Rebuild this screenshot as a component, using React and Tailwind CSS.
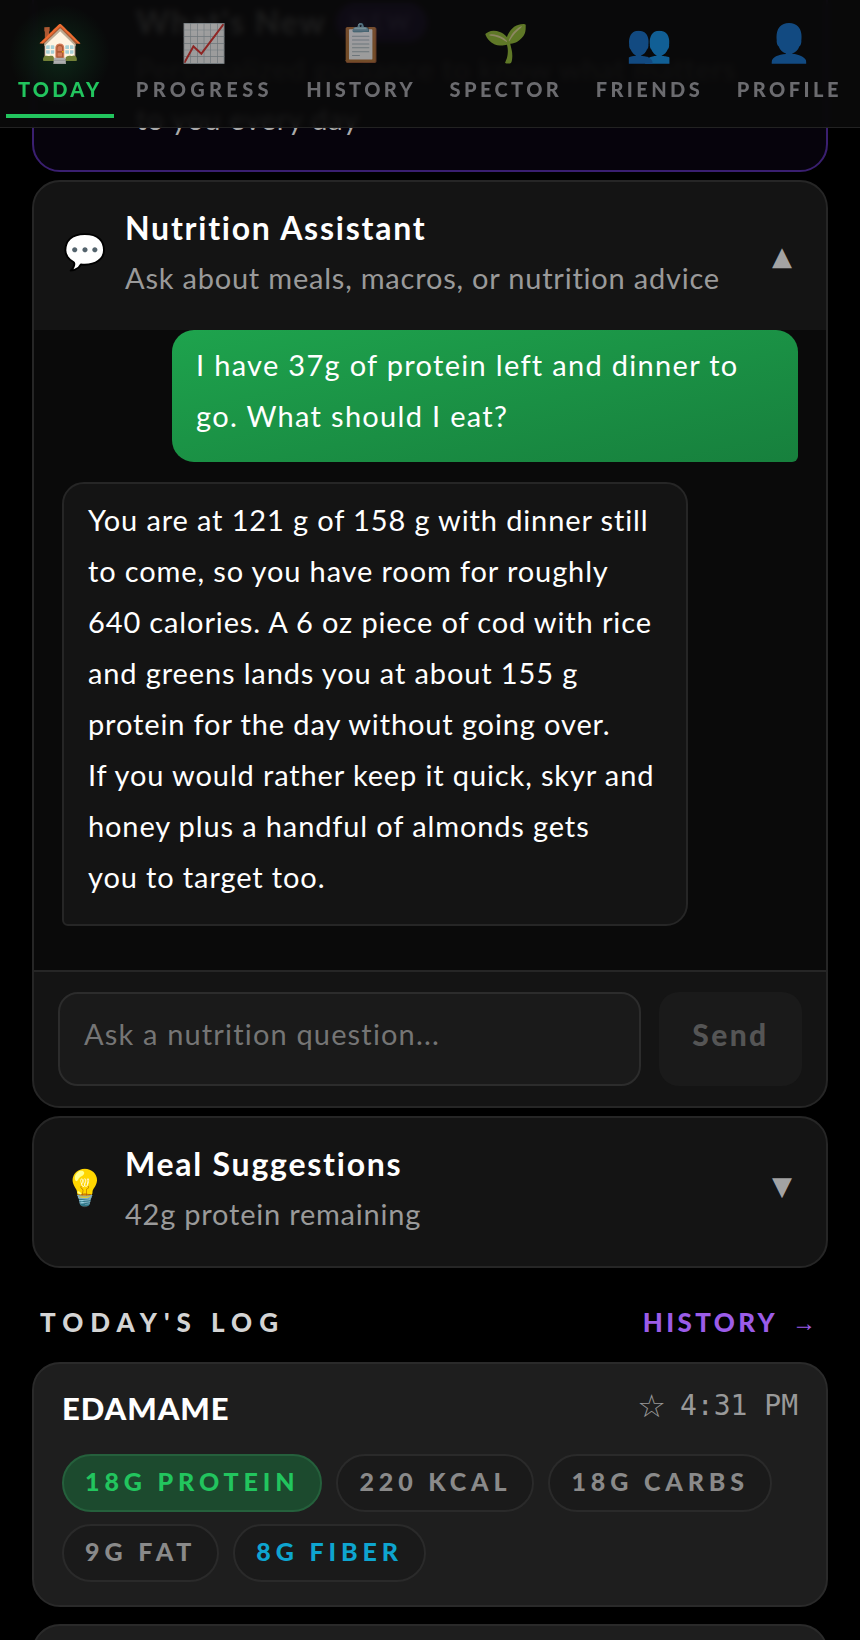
const tabs = [
  { icon: "🏠", label: "TODAY", active: true, spacing: "tracking-[0.16em]" },
  { icon: "📈", label: "PROGRESS", spacing: "tracking-[0.215em]" },
  { icon: "📋", label: "HISTORY", spacing: "tracking-[0.17em]" },
  { icon: "🌱", label: "SPECTOR", spacing: "tracking-[0.17em]" },
  { icon: "👥", label: "FRIENDS", spacing: "tracking-[0.17em]" },
  { icon: "👤", label: "PROFILE", spacing: "tracking-[0.175em]" },
];

const NavTab = ({ icon, label, active, spacing }) => (
  <div className="relative flex h-[118px] flex-col items-center px-3 pt-[17px]">
    {active && (
      <div className="absolute left-1/2 top-0 h-[110px] w-[110px] -translate-x-1/2 rounded-full bg-[radial-gradient(circle,rgba(34,197,94,0.16),transparent_65%)]" />
    )}
    <span className={`relative text-[37px] leading-[50px] ${active ? "" : "opacity-60"}`}>{icon}</span>
    <span
      className={`relative mt-[10px] text-[20px] font-black leading-[24px] ${spacing} ${
        active ? "text-[#22c55e]" : "text-[#6b6b6f]"
      }`}
    >
      {label}
    </span>
    {active && <div className="absolute bottom-0 left-0 right-0 h-[4px] bg-[#22c55e]" />}
  </div>
);

const PanelHead = ({ icon, title, sub, arrow, arrowClass = "" }) => (
  <div className="flex items-center bg-[#141414] pl-[29px] pr-[34px]">
    <span className="-mt-[12px] w-[38px] text-center text-[35px] leading-none">{icon}</span>
    <div className="-mt-[6px] ml-[24px] flex-1">
      <div className="text-[32px] font-bold leading-[50px] tracking-[0.055em] text-white">{title}</div>
      <div className="text-[29px] leading-[50px] tracking-[0.027em] text-[#9a9a9a]">{sub}</div>
    </div>
    <span className={`font-['DejaVu_Sans'] text-[26px] text-[#a3a3a3] ${arrowClass}`}>{arrow}</span>
  </div>
);

const Chip = ({ children, className }) => (
  <span
    className={`flex h-[58px] items-center rounded-full border-2 px-[21px] pb-[2px] text-[25px] font-black tracking-[0.195em] ${className}`}
  >
    {children}
  </span>
);

export default function App() {
  return (
    <div className="relative h-[1640px] overflow-hidden bg-black px-[32px] font-['Lato',sans-serif]">
      <nav className="absolute inset-x-0 top-0 z-10 flex h-[128px] justify-between border-b border-[#222] bg-[rgba(10,10,10,0.9)] px-[6px] backdrop-blur-[3px]">
        {tabs.map((tab) => (
          <NavTab key={tab.label} {...tab} />
        ))}
      </nav>

      <div className="mt-[-40px] flex h-[212px] flex-col rounded-[28px] border-2 border-[#3a1f70] bg-[#06030c] px-[102px] pt-[38px]">
        <div className="flex h-[44px] items-center gap-[10px]">
          <span className="text-[32px] font-bold tracking-[0.05em] text-[#ccc]">What's New</span>
          <span className="rounded-full bg-[#3b1a78] px-[14px] py-[3px] text-[22px] font-bold tracking-[0.15em] text-[#8f6fd0]">NEW</span>
        </div>
        <div className="whitespace-nowrap text-[29px] leading-[50px] tracking-[0.027em] text-[#aaa]">
          <span className="text-[#555]">Personalized guidance to know what matters</span>
          <br />
          to you every day
        </div>
      </div>

      <section className="mt-[8px] overflow-hidden rounded-[28px] border-2 border-[#262626] bg-[#141414]">
        <div className="flex h-[148px] items-center">
          <div className="w-full">
            <PanelHead
              icon="💬"
              title="Nutrition Assistant"
              sub="Ask about meals, macros, or nutrition advice"
              arrow="▲"
            />
          </div>
        </div>
        <div className="flex flex-col bg-[#0a0a0a] px-[28px] pb-[44px]">
          <div className="ml-auto w-[626px] rounded-[22px] rounded-br-[6px] bg-gradient-to-br from-[#1ea34d] to-[#17803d] px-[24px] pb-[21px] pt-[9px] text-[29px] leading-[51px] tracking-[0.045em] text-white">
            I have 37g of protein left and dinner to
            <br />
            go. What should I eat?
          </div>
          <div className="mt-[20px] w-[626px] rounded-[22px] rounded-bl-[6px] border-2 border-[#262626] bg-[#141414] px-[24px] pb-[22px] pt-[10px] text-[29px] leading-[51px] tracking-[0.03em] text-white">
            You are at 121 g of 158 g with dinner still
            <br />
            to come, so you have room for roughly
            <br />
            640 calories. A 6 oz piece of cod with rice
            <br />
            and greens lands you at about 155 g
            <br />
            protein for the day without going over.
            <br />
            If you would rather keep it quick, skyr and
            <br />
            honey plus a handful of almonds gets
            <br />
            you to target too.
          </div>
        </div>
        <div className="flex gap-[18px] border-t-2 border-[#262626] p-[20px] px-[24px]">
          <div className="flex h-[94px] flex-1 items-center rounded-[20px] border-2 border-[#2c2c2c] bg-[#1a1a1a] px-[24px] pb-[10px] text-[29px] tracking-[0.04em] text-[#757575]">
            Ask a nutrition question...
          </div>
          <div className="flex h-[94px] w-[143px] items-center justify-center rounded-[20px] bg-[#1a1a1a] pb-[10px] text-[30px] font-black tracking-[0.08em] text-[#555]">
            Send
          </div>
        </div>
      </section>

      <section className="mt-[8px] flex h-[152px] items-center overflow-hidden rounded-[28px] border-2 border-[#262626] bg-[#141414]">
        <div className="w-full">
          <PanelHead icon="💡" title="Meal Suggestions" sub="42g protein remaining" arrow="▼" arrowClass="-mt-[12px]" />
        </div>
      </section>

      <div className="mt-[35px] flex items-center justify-between pl-[8px] pr-[12px]">
        <span className="text-[26px] font-black tracking-[0.27em] text-[#d4d4d4]">TODAY'S LOG</span>
        <span className="flex items-center gap-[14px] text-[26px] font-black tracking-[0.13em] text-[#9b5ce8]">
          HISTORY
          <span className="font-['Liberation_Sans'] text-[24px] font-normal tracking-normal">→</span>
        </span>
      </div>

      <section className="mt-[20px] h-[245px] rounded-[28px] border-2 border-[#2a2a2a] bg-[#1e1e1e] px-[28px] pt-[20px]">
        <div className="flex items-start justify-between">
          <span className="mt-[1px] text-[31px] font-black tracking-[0.03em] text-white">EDAMAME</span>
          <span className="mt-[2px] flex items-center gap-[14px] text-[#999]">
            <span className="font-['DejaVu_Sans'] text-[32px] leading-[40px]">☆</span>
            <span className="font-['DejaVu_Sans_Mono'] text-[28px] leading-[40px]">4:31 PM</span>
          </span>
        </div>
        <div className="mt-[22px] flex flex-wrap gap-x-[14px] gap-y-[12px]">
          <Chip className="border-[#25603c] bg-[#1c4a2e] text-[#22c55e]">18G PROTEIN</Chip>
          <Chip className="border-[#2a2a2a] bg-[#1a1a1a] text-[#8a8a8a]">220 KCAL</Chip>
          <Chip className="border-[#2a2a2a] bg-[#1a1a1a] text-[#8a8a8a]">18G CARBS</Chip>
          <Chip className="border-[#2a2a2a] bg-[#1a1a1a] text-[#8a8a8a]">9G FAT</Chip>
          <Chip className="border-[#2a2a2a] bg-[#1a1a1a] text-[#0ea5d0]">8G FIBER</Chip>
        </div>
      </section>

      <section className="mt-[17px] h-[100px] rounded-[28px] border-2 border-[#2a2a2a] bg-[#1e1e1e]" />
    </div>
  );
}
